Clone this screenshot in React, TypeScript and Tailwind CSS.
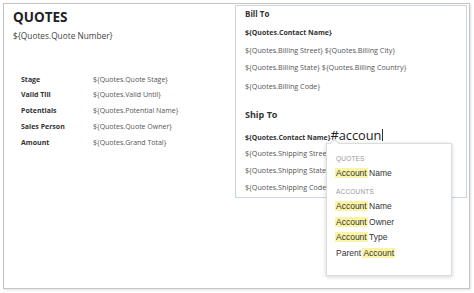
import React from "react";

const doc = { fontFamily: '"Open Sans", "DejaVu Sans", sans-serif' };
const pop = { fontFamily: '"Liberation Sans", Arial, sans-serif' };

function Hl({ children }: { children: React.ReactNode }) {
  return <span className="bg-[#fbf3a6] px-[1px] -mx-[1px]">{children}</span>;
}

export default function App() {
  const fields: [string, string][] = [
    ["Stage", "${Quotes.Quote Stage}"],
    ["Valid Till", "${Quotes.Valid Until}"],
    ["Potentials", "${Quotes.Potential Name}"],
    ["Sales Person", "${Quotes.Quote Owner}"],
    ["Amount", "${Quotes.Grand Total}"],
  ];
  return (
    <div className="w-[474px] h-[293px] bg-white p-[3px]" style={doc}>
      <div className="relative w-[467px] h-[286px] border border-[#c4c4c4] shadow-[1px_1px_2px_rgba(0,0,0,0.12)] bg-white flex">
        {/* left column */}
        <div className="flex-1 pl-[9px] pt-[4px] text-[#333]">
          <div className="text-[13.5px] leading-[18px] font-bold text-[#222]">QUOTES</div>
          <div className="mt-[4px] text-[8.3px] leading-[12px] text-[#444]">{"${Quotes.Quote Number}"}</div>
          <div className="mt-[30px] ml-[8px] grid grid-cols-[72px_auto] auto-rows-[15.75px] items-center text-[7px]">
            {fields.map(([l, v]) => (
              <React.Fragment key={l}>
                <div className="font-bold text-[#333]">{l}</div>
                <div className="text-[#555]">{v}</div>
              </React.Fragment>
            ))}
          </div>
        </div>
        {/* right box */}
        <div className="w-[232px] h-[193px] mt-[1px] mr-[2px] border border-[#c8d5e2] pl-[9px] text-[7.2px] text-[#555] overflow-hidden">
          <div className="h-[16px] leading-[16px] text-[8px] font-bold text-[#333]">Bill To</div>
          <div className="mt-[3px] h-[16px] leading-[16px] text-[7px] font-bold text-[#333]">{"${Quotes.Contact Name}"}</div>
          <div className="mt-[1px] h-[16px] leading-[16px]">{"${Quotes.Billing Street} ${Quotes.Billing City}"}</div>
          <div className="mt-[1px] h-[16px] leading-[16px]">{"${Quotes.Billing State} ${Quotes.Billing Country}"}</div>
          <div className="mt-[3px] h-[16px] leading-[16px]">{"${Quotes.Billing Code}"}</div>
          <div className="mt-[13px] h-[16px] leading-[16px] text-[9px] font-bold text-[#333]">Ship To</div>
          <div className="mt-[4px] h-[16px] flex items-baseline leading-[16px]">
            <span className="text-[6.9px] font-bold text-[#333]">{"${Quotes.Contact Name}"}</span>
            <span className="text-[12.8px] text-[#222] leading-[16px]">#accoun</span>
            <span className="ml-[1px] w-[1px] h-[12px] bg-[#333] self-center"></span>
          </div>
          <div className="mt-[2px] h-[16px] leading-[16px] whitespace-nowrap">{"${Quotes.Shipping Street}"}</div>
          <div className="mt-[1px] h-[16px] leading-[16px] whitespace-nowrap">{"${Quotes.Shipping State}"}</div>
          <div className="mt-[1px] h-[16px] leading-[16px] whitespace-nowrap">{"${Quotes.Shipping Code}"}</div>
        </div>

        {/* suggestion popup */}
        <div
          className="absolute left-[322px] top-[139px] w-[126px] h-[133px] bg-white border border-[#dcdcdc] shadow-[0_1px_4px_rgba(0,0,0,0.18)] pl-[9px] pt-[8px] text-[8.5px] text-[#333]"
          style={pop}
        >
          <div className="absolute -top-[4px] left-[4px] w-[7px] h-[7px] bg-white border-l border-t border-[#dcdcdc] rotate-45"></div>
          <div className="h-[14px] leading-[14px] text-[6.5px] text-[#999] tracking-[0.2px]">QUOTES</div>
          <div className="h-[15px] leading-[15px]"><Hl>Account</Hl> Name</div>
          <div className="mt-[4px] h-[14px] leading-[14px] text-[6.5px] text-[#999] tracking-[0.2px]">ACCOUNTS</div>
          <div className="h-[15.5px] leading-[15.5px]"><Hl>Account</Hl> Name</div>
          <div className="h-[15.5px] leading-[15.5px]"><Hl>Account</Hl> Owner</div>
          <div className="h-[15.5px] leading-[15.5px]"><Hl>Account</Hl> Type</div>
          <div className="h-[15.5px] leading-[15.5px]">Parent <Hl>Account</Hl></div>
        </div>
      </div>
    </div>
  );
}
